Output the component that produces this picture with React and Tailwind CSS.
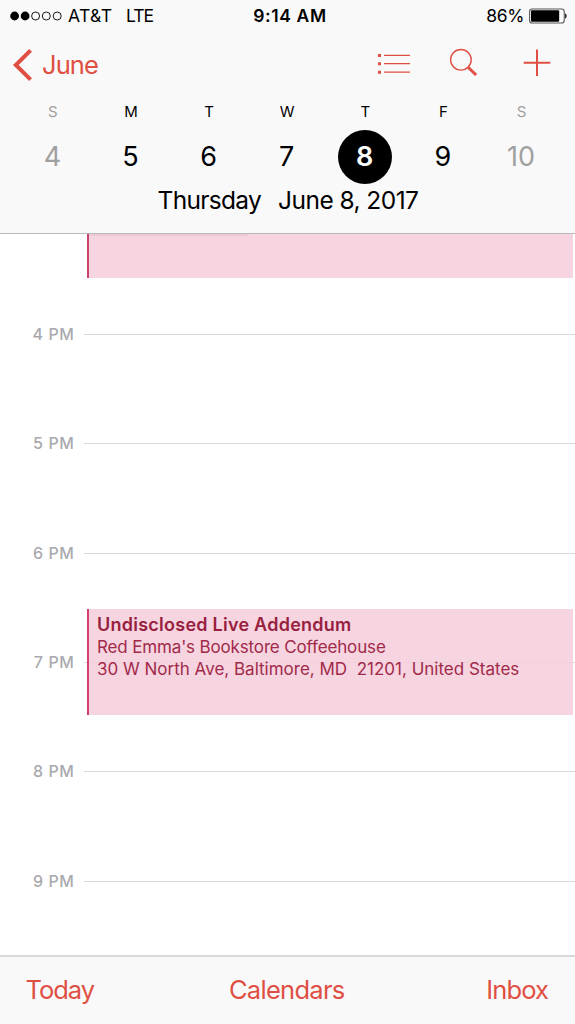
const days = [
  { letter: 'S', num: '4', muted: true },
  { letter: 'M', num: '5' },
  { letter: 'T', num: '6' },
  { letter: 'W', num: '7' },
  { letter: 'T', num: '8', selected: true },
  { letter: 'F', num: '9' },
  { letter: 'S', num: '10', muted: true },
];

const hours = ['4 PM', '5 PM', '6 PM', '7 PM', '8 PM', '9 PM'];

function StatusBar() {
  return (
    <div className="grid h-8 grid-cols-3 items-center text-black">
      <div className="flex items-center pl-[10px]">
        <svg width="52" height="10" viewBox="0 0 52 10" aria-hidden="true">
          <circle cx="4.6" cy="5" r="4.4" />
          <circle cx="15.1" cy="5" r="4.4" />
          <g fill="none" stroke="currentColor" strokeWidth="0.9">
            <circle cx="25.6" cy="5" r="4" />
            <circle cx="36.3" cy="5" r="4" />
            <circle cx="47.2" cy="5" r="4" />
          </g>
        </svg>
        <span className="ml-[6px] text-[17.5px] tracking-[0.4px]">AT&amp;T</span>
        <span className="ml-[13.5px] text-[17.5px] tracking-[-1px]">LTE</span>
      </div>
      <div className="pl-[5px] text-center text-[17.5px] font-semibold tracking-[0.6px]">9:14 AM</div>
      <div className="flex items-center justify-end pr-2">
        <span className="text-[17.5px] tracking-[-0.4px]">86%</span>
        <svg className="ml-[5px]" width="38" height="16" viewBox="0 0 38 16" aria-hidden="true">
          <rect x="0.6" y="1" width="34.6" height="14" rx="2.6" fill="#fff" stroke="#555" strokeWidth="1.1" />
          <rect x="2" y="2.3" width="28.2" height="11.4" rx="1" />
          <path d="M36.2 5.3c1.8.6 1.8 4.8 0 5.4z" />
        </svg>
      </div>
    </div>
  );
}

function NavBar() {
  return (
    <div className="flex h-[66px] items-center justify-between text-[#df4f43]">
      <button className="flex items-center pl-3">
        <svg width="22" height="34" viewBox="0 0 22 34" fill="none" stroke="currentColor" strokeWidth="4" aria-hidden="true">
          <path d="M18.6 2.3 3.8 17l14.8 14.7" />
        </svg>
        <span className="ml-[8px] text-[25.5px] tracking-[-0.9px]">June</span>
      </button>
      <div className="flex items-center">
        <svg width="34" height="22" viewBox="0 0 34 22" fill="currentColor" aria-hidden="true">
          <path d="M1 0h3v3H1zM1 8.2h3v3H1zM1 16.7h3v3H1z" />
          <path d="M7 .8h26v1.3H7zM7 9h26v1.3H7zM7 17.5h26v1.3H7z" />
        </svg>
        <svg className="mb-[4px] ml-[38px]" width="30" height="30" viewBox="0 0 30 30" fill="none" stroke="currentColor" aria-hidden="true">
          <circle cx="11.9" cy="11.8" r="10.3" strokeWidth="1.4" />
          <path d="m18.8 19 8.3 8" strokeWidth="3" />
        </svg>
        <svg className="mr-[24px] mb-[4px] ml-[44px]" width="28" height="28" viewBox="0 0 28 28" fill="none" stroke="currentColor" strokeWidth="2" aria-hidden="true">
          <path d="M14 .4v26.6M.7 13.7h26.6" />
        </svg>
      </div>
    </div>
  );
}

function WeekStrip() {
  return (
    <div className="grid grid-cols-7 pr-[15px] pl-[13.4px]">
      {days.map((d, i) => (
        <div key={i} className={d.muted ? 'flex flex-col items-center text-[#a0a0a0]' : 'flex flex-col items-center text-black'}>
          <span className="mt-[4px] h-[28px] pl-[1px] text-[15px] leading-[20px]">{d.letter}</span>
          <span
            className={
              d.selected
                ? 'flex size-[54px] items-center justify-center rounded-full bg-black text-[27px] font-semibold text-white'
                : 'flex size-[54px] items-center justify-center text-[27px]'
            }
          >
            {d.num}
          </span>
        </div>
      ))}
    </div>
  );
}

function HourGrid() {
  return (
    <div className="flex flex-col pt-[90.1px]">
      {hours.map((h) => (
        <div key={h} className="flex h-[109.33px] shrink-0 items-start">
          <div className="w-[74.5px] text-right text-[16px] leading-[20px] font-medium tracking-[0.6px] text-[#a9a9ad]">{h}</div>
          <div className="mt-[10px] ml-[9.5px] h-px flex-1 bg-[#d9d9d9]" />
        </div>
      ))}
    </div>
  );
}

export default function App() {
  return (
    <div className="flex h-[1024px] w-[575px] flex-col overflow-hidden bg-white font-['Inter','Liberation_Sans',sans-serif]">
      <header className="h-[234px] shrink-0 border-b border-[#b9b9b9] bg-[#f9f9f9]">
        <StatusBar />
        <NavBar />
        <WeekStrip />
        <div className="flex justify-center gap-[17px] pl-[1px] text-[24.5px] leading-[32px] text-black">
          <span className="tracking-[-0.7px]">Thursday</span>
          <span className="tracking-[-0.55px]">June 8, 2017</span>
        </div>
      </header>

      <main className="relative flex-1 overflow-hidden">
        <HourGrid />
        <div className="absolute top-0 right-[2px] left-[87px] h-[44px] border-l-2 border-[#cb4468] bg-[#f6d5e0]">
          <div className="h-[2px] w-[159px] bg-[#eec9d5]" />
        </div>
        <div className="absolute top-[375px] right-[2px] left-[87px] h-[106px] border-l-2 border-[#d4406b] bg-[#f4cddad9] pt-[5px] pl-[8px] text-[17px] text-[#a12a4a]">
          <div className="text-[18px] leading-[22px] font-semibold tracking-[0.25px] text-[#98203f]">Undisclosed Live Addendum</div>
          <div className="leading-[22px] tracking-[-0.15px]">Red Emma's Bookstore Coffeehouse</div>
          <div className="leading-[22px] whitespace-pre">30 W North Ave, Baltimore, MD  21201, United States</div>
        </div>
      </main>

      <footer className="grid h-[69px] shrink-0 grid-cols-[1fr_auto_1fr] items-center border-t-2 border-[#d9d9d9] bg-[#f9f9f9] pr-[27px] pl-[25.5px] text-[25.5px] text-[#df4f43]">
        <button className="justify-self-start tracking-[-1px]">Today</button>
        <button className="tracking-[-0.7px]">Calendars</button>
        <button className="justify-self-end tracking-[-0.9px]">Inbox</button>
      </footer>
    </div>
  );
}
